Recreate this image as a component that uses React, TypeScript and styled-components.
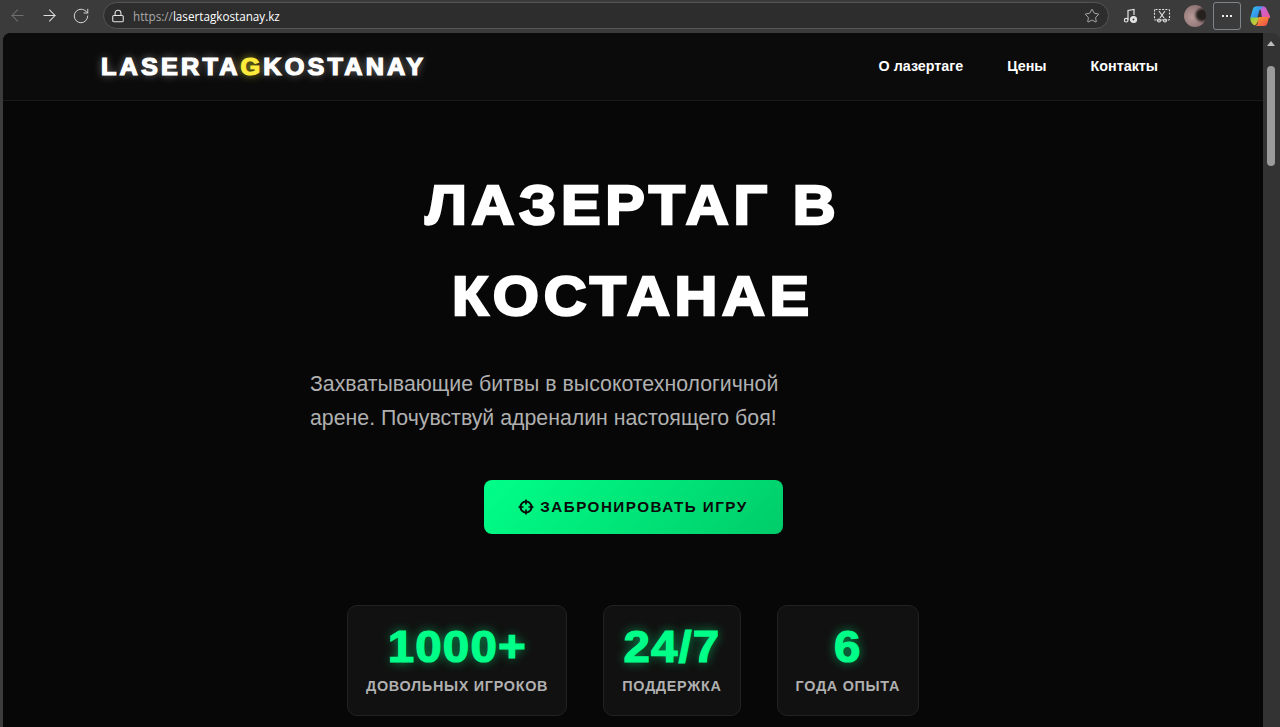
import styled, { createGlobalStyle } from "styled-components";
import { ArrowLeft, ArrowRight, Lock, RotateCw, Star } from "lucide-react";

const GlobalStyle = createGlobalStyle`
  html, body {
    margin: 0;
    height: 100%;
    overflow: hidden;
    background: #3b3b3b;
  }
  * {
    box-sizing: border-box;
  }
`;

const stats = [
  { value: "1000+", label: "Довольных игроков" },
  { value: "24/7", label: "Поддержка" },
  { value: "6", label: "Года опыта" },
];

const App = () => (
  <Window>
    <GlobalStyle />
    <Toolbar>
      <NavIcons>
        <ArrowLeft size={19} strokeWidth={1.3} color="#6f6f6f" />
        <ArrowRight size={19} strokeWidth={1.3} color="#e0e0e0" />
        <RotateCw size={18} strokeWidth={1.3} color="#d8d8d8" />
      </NavIcons>
      <AddressBar>
        <Lock size={14} strokeWidth={1.8} color="#e6e6e6" />
        <Url>
          <span>https://</span>lasertagkostanay.kz
        </Url>
        <StarIcon>
          <Star size={16} strokeWidth={1.2} color="#c8c8c8" />
        </StarIcon>
      </AddressBar>
      <ToolIcons>
        <svg width="18" height="18" viewBox="0 0 18 18" fill="none" stroke="#e4e4e4" strokeWidth="1.2">
          <path d="M6 13V3.5l6-1V8" />
          <circle cx="4.2" cy="13.2" r="1.8" />
          <circle cx="11.5" cy="12.5" r="3" fill="#e4e4e4" />
          <circle cx="11.5" cy="12.5" r="0.9" fill="#3b3b3b" stroke="none" />
        </svg>
        <svg width="18" height="18" viewBox="0 0 18 18" fill="none" stroke="#e4e4e4" strokeWidth="1.1">
          <rect x="1.5" y="2.5" width="15" height="10.5" rx="1" strokeDasharray="2 1.3" />
          <path d="M6 4l5 7M12 4l-5 7" />
          <circle cx="6" cy="13.5" r="1.5" />
          <circle cx="12" cy="13.5" r="1.5" />
        </svg>
        <Avatar />
        <MenuButton>
          <Dot />
          <Dot />
          <Dot />
        </MenuButton>
        <svg width="22" height="22" viewBox="0 0 22 22">
          <defs>
            <linearGradient id="copilot-a" x1="0" y1="0" x2="1" y2="1">
              <stop offset="0" stopColor="#2fc7e8" />
              <stop offset="1" stopColor="#3f6df0" />
            </linearGradient>
            <linearGradient id="copilot-b" x1="0" y1="0" x2="1" y2="1">
              <stop offset="0" stopColor="#b36bf0" />
              <stop offset="1" stopColor="#f0559a" />
            </linearGradient>
            <linearGradient id="copilot-c" x1="0" y1="0" x2="1" y2="1">
              <stop offset="0" stopColor="#7ed04a" />
              <stop offset="1" stopColor="#f5c22e" />
            </linearGradient>
            <linearGradient id="copilot-d" x1="0" y1="0" x2="1" y2="1">
              <stop offset="0" stopColor="#f7a02c" />
              <stop offset="1" stopColor="#f0484f" />
            </linearGradient>
          </defs>
          <path d="M7 1.500h7.500c1.500 0 2.500 1 3 2.500L21 11c.5 1.500-.5 2.500-2 2.500h-6L12 6c-.2-1.500-1.500-2-2.500-2z" fill="url(#copilot-b)" />
          <path d="M7 1.500c-1.700 0-2.800 1.200-3.200 2.800L1.500 12c-.4 1.500.5 2.500 2 2.500H8L10 6.500c.4-1.500 1-2.500 2.500-3L14 1.500z" fill="url(#copilot-a)" />
          <path d="M1.500 12.500c-.5 3 .5 5 2.500 7 1.200 1 2.500.8 3.300-.5L11 12.500z" fill="url(#copilot-c)" />
          <path d="M10 12h10l-1.500 6c-.5 2-1.700 3-3.500 3H6c1.500-.5 2.200-1.500 2.700-3z" fill="url(#copilot-d)" />
        </svg>
      </ToolIcons>
    </Toolbar>
    <Viewport>
      <Page>
        <Header>
          <HeaderInner>
            <Logo>
              LASERTA<LogoAccent>G</LogoAccent>KOSTANAY
            </Logo>
            <Nav>
              <NavLink>О лазертаге</NavLink>
              <NavLink>Цены</NavLink>
              <NavLink>Контакты</NavLink>
            </Nav>
          </HeaderInner>
        </Header>
        <Hero>
          <Title>
            Лазертаг в
            <br />
            Костанае
          </Title>
          <LeadBox>
            <Lead>
              Захватывающие битвы в высокотехнологичной арене. Почувствуй адреналин настоящего боя!
            </Lead>
          </LeadBox>
          <BookButton>
            <svg width="16" height="16" viewBox="0 0 16 16" fill="none" stroke="#0a0a0a" strokeWidth="2">
              <circle cx="8" cy="8" r="5.500" />
              <path d="M8 0.500v5M8 10.500v5M0.500 8h5M10.500 8h5" strokeWidth="1.700" />
            </svg>
            <ButtonLabel>Забронировать игру</ButtonLabel>
          </BookButton>
          <Stats>
            {stats.map((stat) => (
              <StatCard key={stat.label}>
                <StatValue>{stat.value}</StatValue>
                <StatLabel>{stat.label}</StatLabel>
              </StatCard>
            ))}
          </Stats>
        </Hero>
      </Page>
      <Scrollbar>
        <ScrollArrow />
        <ScrollThumb />
      </Scrollbar>
    </Viewport>
  </Window>
);

export default App;

const Window = styled.div`
  width: 1280px;
  height: 727px;
  display: flex;
  flex-direction: column;
  overflow: hidden;
  background: #3b3b3b;
  font-family: "Liberation Sans", Arial, sans-serif;
`;

const Toolbar = styled.div`
  height: 33px;
  flex: none;
  display: flex;
  align-items: center;
  padding: 0 9px 2px 8px;
`;

const NavIcons = styled.div`
  display: flex;
  align-items: center;
  gap: 13px;
  width: 95px;
`;

const AddressBar = styled.div`
  width: 1006px;
  height: 27px;
  display: flex;
  align-items: center;
  gap: 8px;
  padding: 0 8px 0 7px;
  border-radius: 14px;
  border: 1px solid #555;
  background: #2d2d2d;
`;

const Url = styled.div`
  flex: 1;
  font-family: "Open Sans", sans-serif;
  font-size: 11.700px;
  color: #fff;

  span {
    color: #a9a9a9;
  }
`;

const StarIcon = styled.div`
  display: flex;
`;

const ToolIcons = styled.div`
  flex: 1;
  display: flex;
  align-items: center;
  gap: 13px;
  margin-left: 13px;
`;

const Avatar = styled.div`
  width: 22px;
  height: 22px;
  border-radius: 50%;
  background: radial-gradient(circle at 82% 45%, #26211f 0 20%, transparent 38%),
    radial-gradient(circle at 35% 55%, #b69a98, #7c5f62);
`;

const MenuButton = styled.div`
  width: 28px;
  height: 28px;
  margin: 0 -5px 0 -6px;
  display: flex;
  align-items: center;
  justify-content: center;
  gap: 2px;
  border: 1px solid #7e868c;
  border-radius: 3px;
`;

const Dot = styled.span`
  width: 2px;
  height: 2px;
  background: #eee;
`;

const Viewport = styled.div`
  flex: 1;
  min-height: 0;
  display: flex;
  padding-left: 3px;
`;

const Page = styled.div`
  width: 1260px;
  height: 100%;
  overflow: hidden;
  border-top-left-radius: 8px;
  background: #070707;
`;

const Scrollbar = styled.div`
  flex: 1;
  display: flex;
  flex-direction: column;
  align-items: center;
  padding: 8px 1px 0 0;
  background: #333;
  border-top-right-radius: 8px;
`;

const ScrollArrow = styled.div`
  width: 0;
  height: 0;
  border-left: 4px solid transparent;
  border-right: 4px solid transparent;
  border-bottom: 5px solid #bdbdbd;
`;

const ScrollThumb = styled.div`
  width: 8px;
  height: 100px;
  margin-top: 20px;
  border-radius: 4px;
  background: #9b9b9b;
`;

const Header = styled.header`
  height: 68px;
  background: #0b0b0b;
  border-bottom: 1px solid #1a1a1a;
`;

const HeaderInner = styled.div`
  width: 1064px;
  height: 100%;
  margin: 0 auto;
  display: flex;
  align-items: center;
  justify-content: space-between;
`;

// no Arial Black here, so bold gets thickened and widened to the same shape
const Logo = styled.div`
  padding-top: 1px;
  font-size: 23px;
  font-weight: 700;
  letter-spacing: 2.850px;
  color: #fff;
  -webkit-text-stroke: 1.200px #fff;
  text-shadow: 0 0 8px rgba(255, 255, 255, 0.5);
  transform: scaleX(1.1);
  transform-origin: left center;
`;

const LogoAccent = styled.span`
  color: #ffeb3b;
  -webkit-text-stroke: 1.200px #ffeb3b;
  text-shadow: 0 0 8px rgba(255, 235, 59, 0.8);
`;

const Nav = styled.nav`
  display: flex;
  gap: 44px;
  padding: 0 7px 2px 0;
`;

const NavLink = styled.a`
  font-size: 14.300px;
  font-weight: 700;
  color: #fff;
`;

const Hero = styled.main`
  display: flex;
  flex-direction: column;
  align-items: center;
  padding-top: 58px;
`;

const Title = styled.h1`
  margin: 0;
  font-size: 56px;
  line-height: 91px;
  font-weight: 700;
  letter-spacing: 4.400px;
  text-align: center;
  text-transform: uppercase;
  color: #fff;
  -webkit-text-stroke: 2.400px #fff;
  transform: scaleX(1.06);
`;

const LeadBox = styled.div`
  width: 646px;
  margin-top: 26px;
`;

const Lead = styled.p`
  width: 490px;
  margin: 0;
  font-size: 21.300px;
  line-height: 34px;
  color: #b0b0b0;
`;

const BookButton = styled.button`
  width: 299px;
  height: 54px;
  margin-top: 45px;
  display: flex;
  align-items: center;
  justify-content: center;
  gap: 6px;
  border: 0;
  border-radius: 8px;
  background: linear-gradient(135deg, #00ff88, #00cc6a);
  font-family: "Liberation Sans", sans-serif;
  font-size: 15.200px;
  font-weight: 700;
  letter-spacing: 1.500px;
  text-transform: uppercase;
  color: #0a0a0a;
`;

const ButtonLabel = styled.span`
  padding-bottom: 2px;
`;

const Stats = styled.div`
  display: flex;
  gap: 36px;
  margin-top: 71px;
`;

const StatCard = styled.div`
  height: 111px;
  padding: 16px 18px 0;
  display: flex;
  flex-direction: column;
  align-items: center;
  border: 1px solid #222;
  border-radius: 10px;
  background: #111;
`;

const StatValue = styled.div`
  font-size: 44px;
  line-height: 50px;
  font-weight: 700;
  letter-spacing: 1px;
  color: #00ff88;
  -webkit-text-stroke: 1.200px #00ff88;
  text-shadow: 0 0 10px rgba(0, 255, 136, 0.6);
  transform: scaleX(1.08);
`;

const StatLabel = styled.div`
  margin-top: 6px;
  font-size: 14.400px;
  font-weight: 700;
  letter-spacing: 0.700px;
  text-transform: uppercase;
  white-space: nowrap;
  color: #b0b0b0;
`;
